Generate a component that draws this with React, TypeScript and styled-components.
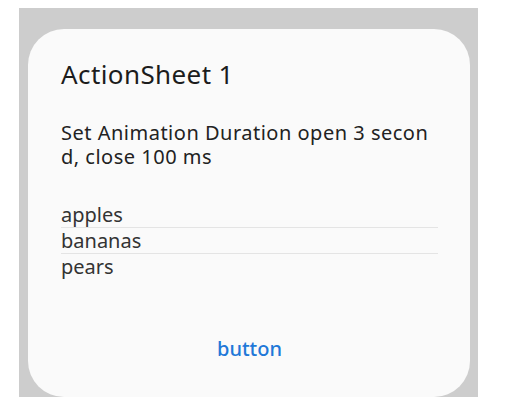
import React from "react";
import styled, { createGlobalStyle } from "styled-components";

const GlobalStyle = createGlobalStyle`
    body {
        margin: 0;
        background: #ffffff;
        font-family: "Noto Sans", "Open Sans", sans-serif;
    }
`;

const Backdrop = styled.div`
    margin: 8px 0 0 19px;
    width: 459px;
    height: 389px;
    background: #cdcdcd;
    padding: 21px 8px 0 9px;
    box-sizing: border-box;
    display: flex;
`;

const Sheet = styled.div`
    flex: 1;
    background: #fafafa;
    border-radius: 36px;
    padding: 29px 32px 0 33px;
    display: flex;
    flex-direction: column;
`;

const Title = styled.h2`
    margin: 0;
    font-size: 26px;
    font-weight: 400;
    letter-spacing: 0.4px;
    line-height: 32px;
    color: #1c1c1c;
`;

const Message = styled.p`
    margin: 31px 0 0;
    width: 372px;
    font-size: 20px;
    letter-spacing: 0.5px;
    line-height: 24px;
    color: #222;
    word-break: break-all;
`;

const OptionList = styled.ul`
    list-style: none;
    margin: 33px 0 0;
    padding: 0;
`;

const Option = styled.li<{ $last?: boolean }>`
    font-size: 20px;
    line-height: 25px;
    color: #333;
    border-bottom: ${(p) => (p.$last ? "none" : "1px solid #e4e4e4")};
`;

const ButtonRow = styled.div`
    margin-top: auto;
    padding-bottom: 36px;
    display: flex;
    justify-content: center;
`;

const ActionButton = styled.button`
    all: unset;
    cursor: pointer;
    font-size: 20px;
    font-weight: 500;
    line-height: 24px;
    color: #1f78d8;
`;

const options = ["apples", "bananas", "pears"];

export default function App() {
    return (
        <>
            <GlobalStyle />
            <Backdrop>
                <Sheet>
                    <Title>ActionSheet 1</Title>
                    <Message>Set Animation Duration open 3 second, close 100 ms</Message>
                    <OptionList>
                        {options.map((o, i) => (
                            <Option key={o} $last={i === options.length - 1}>{o}</Option>
                        ))}
                    </OptionList>
                    <ButtonRow>
                        <ActionButton>button</ActionButton>
                    </ButtonRow>
                </Sheet>
            </Backdrop>
        </>
    );
}
